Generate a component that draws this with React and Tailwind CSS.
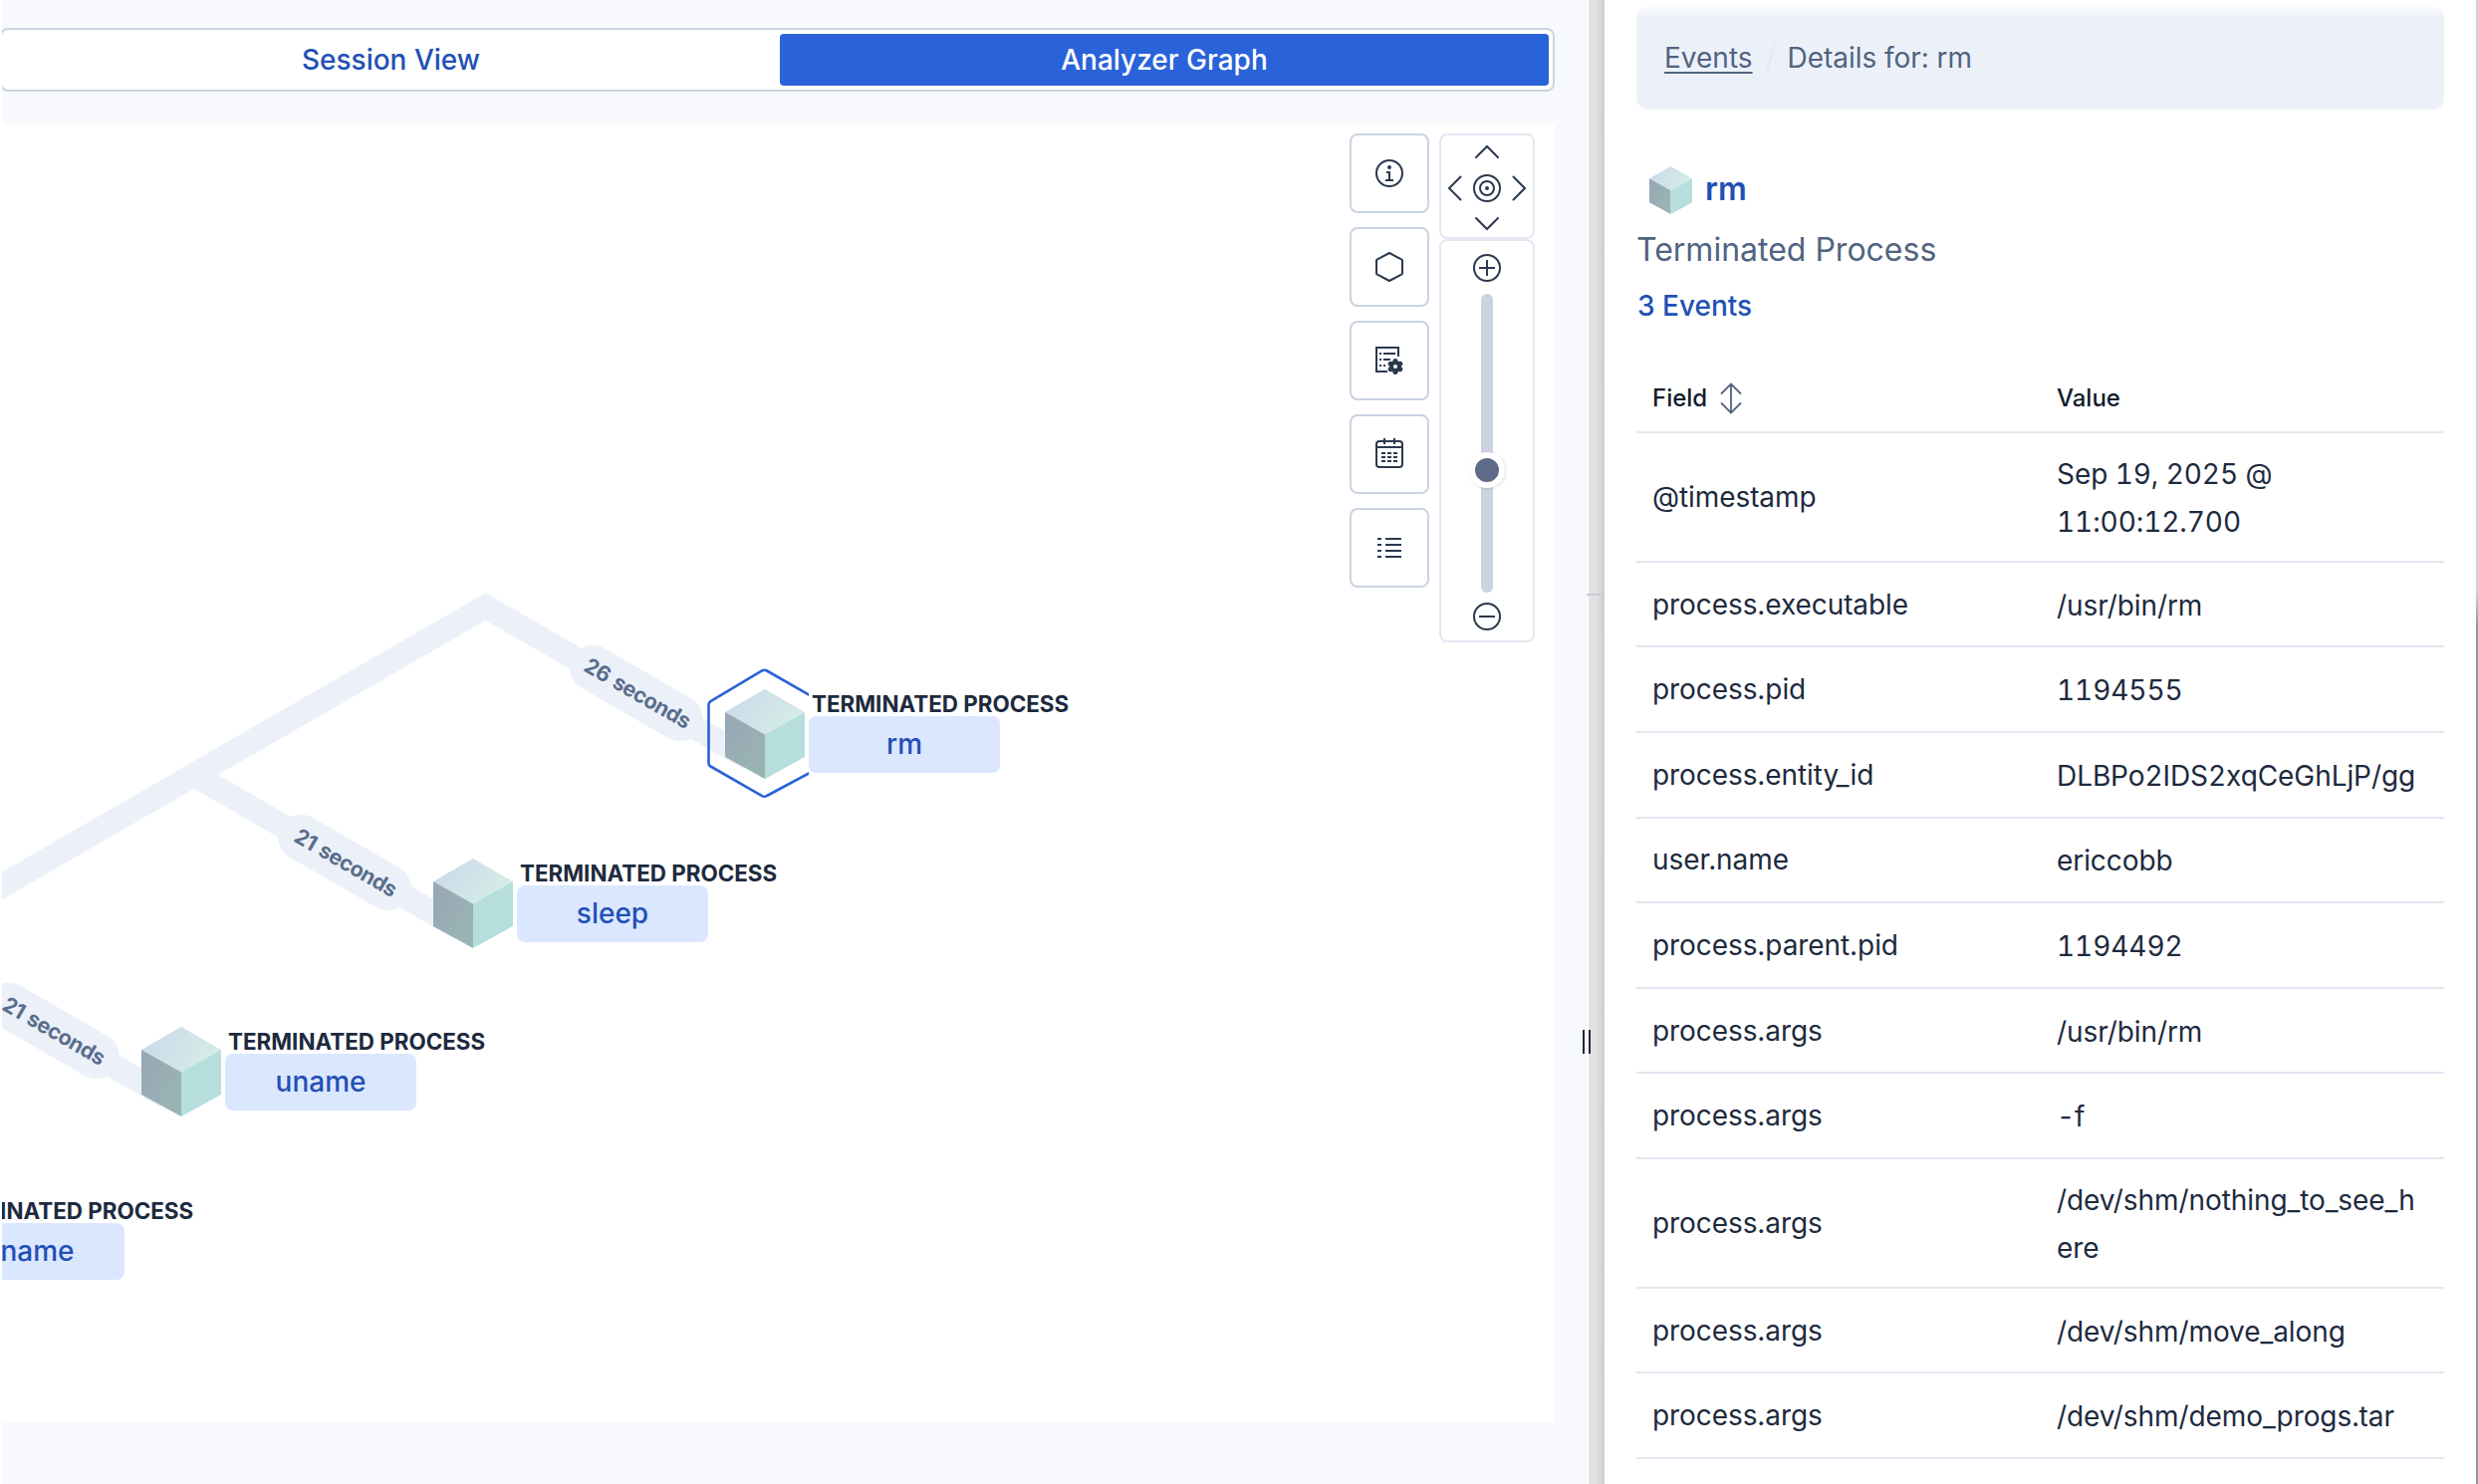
import React from "react";

const ROWS = [
  ["@timestamp", "Sep 19, 2025 @\n11:00:12.700", true],
  ["process.executable", "/usr/bin/rm"],
  ["process.pid", "1194555"],
  ["process.entity_id", "DLBPo2IDS2xqCeGhLjP/gg"],
  ["user.name", "ericcobb"],
  ["process.parent.pid", "1194492"],
  ["process.args", "/usr/bin/rm"],
  ["process.args", "-f"],
  ["process.args", "/dev/shm/nothing_to_see_here", true],
  ["process.args", "/dev/shm/move_along"],
  ["process.args", "/dev/shm/demo_progs.tar"],
];

function Cube({ className }) {
  return (
    <svg viewBox="0 0 80 90" preserveAspectRatio="none" className={className}>
      <defs>
        <linearGradient id="cubeTop" x1="0" y1="0.3" x2="1" y2="0.8">
          <stop offset="0" stopColor="#cbdaea" />
          <stop offset="1" stopColor="#d6efe6" />
        </linearGradient>
        <linearGradient id="cubeLeft" x1="0" y1="0" x2="0.7" y2="0.8">
          <stop offset="0" stopColor="#97a6b6" />
          <stop offset="1" stopColor="#99b3b3" />
        </linearGradient>
      </defs>
      <path d="M40 0 80 23 40 45.500 0 23Z" fill="url(#cubeTop)" />
      <path d="M0 23 40 45.500V90L0 68Z" fill="url(#cubeLeft)" />
      <path d="M80 23 40 45.500V90L80 68Z" fill="#b5dedc" />
    </svg>
  );
}

const NODES = [
  { x: 768, y: 737, name: "rm" },
  { x: 475, y: 907, name: "sleep" },
  { x: 182, y: 1076, name: "uname" },
  { x: -111, y: 1246, name: "uname" },
];

const PILLS = [
  { x: 638.5, y: 696, text: "26 seconds" },
  { x: 346, y: 865.5, text: "21 seconds" },
  { x: 53, y: 1035, text: "21 seconds" },
];

function Graph() {
  return (
    <div className="absolute inset-0 overflow-hidden">
      <svg className="absolute left-0 top-0" width="1559" height="1304" viewBox="2 124 1559 1304">
        <clipPath id="beforeLabel">
          <rect x="700" y="660" width="112" height="150" />
        </clipPath>
        <g fill="none" stroke="#ecf1f9" strokeWidth="24" strokeLinejoin="miter">
          <path d="M-98 947 487.500 609 752 761.600" />
          <path d="M195 778 460 931" />
          <path d="M-98 948 167 1101" />
        </g>
        <path
          d="M765 673.500q2.500-1.400 5 0l53.500 30.700q2 1.200 2 3v60q0 2-2 3.200L770 799q-2.500 1.500-5 0L713.500 769.500q-2-1-2-3v-59q0-2 2-3.300Z"
          fill="none"
          stroke="#2a62d9"
          strokeWidth="2.600"
          clipPath="url(#beforeLabel)"
        />
      </svg>
      {PILLS.map((p, i) => (
        <div
          key={i}
          className="absolute flex h-[46px] w-[147px] -translate-x-1/2 -translate-y-1/2 rotate-30 items-center justify-center rounded-full bg-[#ecf1f9] pb-[2px] pl-[2px] text-[21.5px] font-bold tracking-[-0.5px] [word-spacing:2px] whitespace-nowrap text-[#5a6d8c]"
          style={{ left: p.x - 2, top: p.y - 124 }}
        >
          {p.text}
        </div>
      ))}
      {NODES.map((n, i) => (
        <div key={i} className="absolute h-[90px] w-[80px]" style={{ left: n.x - 42, top: n.y - 169 }}>
          <Cube className="h-[90px] w-[80px]" />
          <div className="absolute top-0 left-[84px] w-[280px]">
            <div className="h-[27px] w-[270px] bg-white pl-[3px] text-[22.400px] leading-[30px] font-bold whitespace-nowrap text-[#1d2a3e]">
              TERMINATED PROCESS
            </div>
            <div className="flex h-[57px] w-[192px] items-center justify-center rounded-lg bg-[#dbe7ff] pb-[2px] text-[28px] font-medium text-[#2250b5]">
              {n.name}
            </div>
          </div>
        </div>
      ))}
    </div>
  );
}

function ToolButton({ children }) {
  return (
    <button className="flex size-20 items-center justify-center rounded-lg border-2 border-[#cad3e2] bg-white">
      <svg width="32" height="32" viewBox="0 0 32 32" fill="none" stroke="#2b394f" strokeWidth="2">
        {children}
      </svg>
    </button>
  );
}

function Controls() {
  return (
    <div className="absolute top-[10px] right-5 flex gap-[10px]">
      <div className="flex flex-col gap-[14px]">
        <ToolButton>
          <circle cx="16" cy="16" r="13" />
          <circle cx="16" cy="10" r="2" fill="#2b394f" stroke="none" />
          <path d="M13 15h3v8M12 23h8" />
        </ToolButton>
        <ToolButton>
          <path d="M16 2 28.500 8.500q.5.300.5 1v13q0 .700-.5 1L16 30 3.500 23.500q-.5-.300-.5-1v-13q0-.700.5-1Z" />
        </ToolButton>
        <ToolButton>
          <path d="M14 27H3V3h22v9M6 9h2M10 9h12M6 15h2M10 15h7M6 21h2M10 21h2" />
          <circle cx="22" cy="22" r="8.500" fill="#fff" stroke="none" />
          <circle cx="22" cy="22" r="6" fill="#2b394f" stroke="none" />
          <path d="M22 16.500v11M17.200 19.250l9.600 5.500M26.800 19.250l-9.600 5.500" strokeWidth="5" strokeLinecap="round" />
          <circle cx="22" cy="22" r="2" fill="#fff" stroke="none" />
        </ToolButton>
        <ToolButton>
          <rect x="3" y="3" width="26" height="26" rx="3" />
          <path d="M3 9h26M11 0v6M21 0v6M8 15h4M14 15h4M20 15h4M8 19h4M14 19h4M20 19h4M8 23h4M14 23h4M20 23h4" />
        </ToolButton>
        <ToolButton>
          <path d="M4 7h4M12 7h16M4 13h4M12 13h16M4 19h4M12 19h16M4 25h4M12 25h16" />
        </ToolButton>
      </div>
      <div className="flex flex-col">
        <div className="h-[106px] w-24 rounded-lg border-2 border-[#e3e8f2] bg-white">
          <svg width="92" height="102" viewBox="1447 136 92 102" fill="none" stroke="#2b394f" strokeWidth="2" strokeLinecap="round">
            <path d="M1482 158 1493 147 1504 158M1482 219 1493 230 1504 219M1466.500 177.500 1455 189 1466.500 200.500M1519.500 177.500 1531 189 1519.500 200.500" />
            <circle cx="1493" cy="189" r="13" />
            <circle cx="1493" cy="189" r="7" />
            <circle cx="1493" cy="189" r="2" fill="#2b394f" stroke="none" />
          </svg>
        </div>
        <div className="flex h-[405px] w-24 flex-col items-center rounded-lg border-2 border-[#e3e8f2] bg-white pt-[13px]">
          <svg width="28" height="28" viewBox="0 0 28 28" fill="none" stroke="#2b394f" strokeWidth="2">
            <circle cx="14" cy="14" r="13" />
            <path d="M6 14h16M14 6v16" />
          </svg>
          <div className="relative mt-3 h-[300px] w-3 rounded-full bg-[#cbd3e2]">
            <div className="absolute top-[159px] left-1/2 size-9 -translate-x-1/2 rounded-full border-6 border-white bg-[#5d6b88] shadow-[1px_1px_3px_rgba(0,0,0,0.12)]" />
          </div>
          <svg className="mt-[10px]" width="28" height="28" viewBox="0 0 28 28" fill="none" stroke="#2b394f" strokeWidth="2">
            <circle cx="14" cy="14" r="13" />
            <path d="M6 14h16" />
          </svg>
        </div>
      </div>
    </div>
  );
}

export default function App() {
  return (
    <div className="flex h-[1490px] w-[2488px] overflow-hidden bg-white pl-[2px] font-['Inter',sans-serif] text-[#1d2a3e]">
      <main className="relative w-[1591px] shrink-0 bg-[#f7f9fd] pt-7">
        <div className="w-[1559px] overflow-hidden">
          <div className="-ml-[2px] flex h-16 w-[1561px] rounded-lg border-2 border-[#cad3e2] bg-white p-1 text-[28px] font-medium">
            <button className="flex-1 pt-0 pr-1 text-[#2250b5]">Session View</button>
            <button className="w-[772px] rounded bg-[#2a62d9] text-white">Analyzer Graph</button>
          </div>
        </div>
        <div className="relative mt-8 h-[1304px] w-[1559px] bg-white">
          <Graph />
          <Controls />
        </div>
        <div className="absolute top-[1034px] left-[1587px] z-10 flex h-6 gap-1">
          <div className="w-[2px] bg-[#1d2a3e]" />
          <div className="w-[2px] bg-[#1d2a3e]" />
        </div>
      </main>
      <div className="w-[18px] shrink-0 border-l-2 border-white bg-linear-to-r from-[#e2e2e2] from-50% to-[#cbcbcb] pt-[596px]">
        <div className="-ml-[2px] h-[2px] bg-[#c9ccd6]" />
      </div>
      <aside className="w-[875px] shrink-0 bg-white pt-[6px] pr-8 pl-8">
        <div className="flex h-[104px] items-center rounded-xl bg-linear-to-b from-[#fbfcfe] to-[#ecf1f9] to-12% pl-7 text-[28px] text-[#516381]">
          <span className="underline decoration-2 underline-offset-4">Events</span>
          <svg className="mr-[11px] ml-3" width="12" height="32" viewBox="0 0 12 32">
            <path d="M10 1 2 31" stroke="#e3e8f2" strokeWidth="2" />
          </svg>
          <span className="tracking-[-0.05px]">Details for: rm</span>
        </div>
        <div className="mt-[54px] flex h-[54px] items-center pl-[13px]">
          <Cube className="h-[48px] w-[43px]" />
          <span className="pb-[3px] pl-[13px] text-[32px] font-semibold text-[#2250b5]">rm</span>
        </div>
        <div className="mt-[8px] h-[50px] text-[32px] leading-[50px] text-[#516381]">Terminated Process</div>
        <div className="mt-[11px] h-10 pl-px text-[28px] leading-10 font-medium text-[#2250b5]">3 Events</div>
        <div className="mt-[40px] flex h-[68px] items-center border-b-2 border-[#e3e8f2] pb-px pl-4 text-[24px] font-medium text-[#111c2c]">
          <div className="flex w-[406px] items-center gap-3">
            Field
            <svg width="24" height="32" viewBox="0 0 24 32" fill="none" stroke="#516381" strokeWidth="1.800">
              <path d="M12 2v28M2 11.500 12 1.500 22 11.500M2 20.500 12 30.500 22 20.500" />
            </svg>
          </div>
          Value
        </div>
        {ROWS.map(([field, value, tall], i) => (
          <div
            key={i}
            className={
              tall
                ? "flex h-[129.800px] items-center border-b-2 border-[#e3e8f2] pl-4 text-[28px] tracking-[-0.08px]"
                : "flex h-[85.600px] items-center border-b-2 border-[#e3e8f2] pl-4 text-[28px] tracking-[-0.08px]"
            }
          >
            <div className="w-[406px] shrink-0 leading-[42px]">{field}</div>
            <div className="w-[372px] pt-[2px] leading-[48px] break-all whitespace-pre-line tabular-nums">{value}</div>
          </div>
        ))}
      </aside>
      <div className="w-[2px] shrink-0 bg-linear-to-b from-[#cfcfcf] from-40% to-[#8f99ab] to-42%" />
    </div>
  );
}
